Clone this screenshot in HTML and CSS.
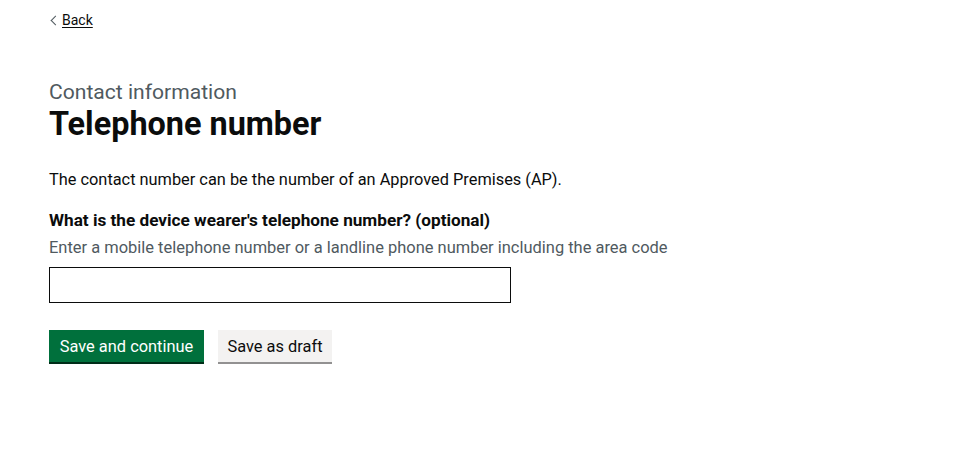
FILE: index.html
```html
<!DOCTYPE html>
<html lang="en">
<head>
<meta charset="utf-8">
<title>Telephone number</title>
<link rel="stylesheet" href="styles.css">
</head>
<body>
<div class="page">
  <a class="back-link" href="#">Back</a>
  <main class="main">
    <span class="caption">Contact information</span>
    <h1 class="heading">Telephone number</h1>
    <p class="body">The contact number can be the number of an Approved Premises (AP).</p>
    <div class="form-group">
      <label class="label" for="tel">What is the device wearer's telephone number? (optional)</label>
      <div class="hint">Enter a mobile telephone number or a landline phone number including the area code</div>
      <input class="input" id="tel" type="tel">
    </div>
    <div class="button-group">
      <button class="button button-primary" type="button">Save and continue</button>
      <button class="button button-secondary" type="button">Save as draft</button>
    </div>
  </main>
</div>
</body>
</html>
```
FILE: styles.css
```css
html, body {
  margin: 0;
  padding: 0;
  background: #ffffff;
}
body {
  font-family: Roboto, "Liberation Sans", Arial, sans-serif;
  color: #0b0c0c;
  -webkit-font-smoothing: antialiased;
}
.page {
  padding: 0 0 0 49px;
}
.back-link {
  position: relative;
  display: inline-block;
  margin-top: 12px;
  padding-left: 13px;
  font-size: 14px;
  line-height: 16px;
  color: #0b0c0c;
  text-decoration: underline;
  text-decoration-thickness: 1px;
  text-underline-offset: 2px;
}
.back-link::before {
  content: "";
  position: absolute;
  left: 3px;
  top: 5px;
  width: 6px;
  height: 6px;
  border-style: solid;
  border-color: #505a5f;
  border-width: 1px 0 0 1px;
  transform: rotate(-45deg);
}
.main {
  display: flex;
  flex-direction: column;
  align-items: flex-start;
  padding-top: 50px;
}
.caption {
  display: block;
  font-size: 21.1px;
  line-height: 25px;
  color: #505a5f;
}
.heading {
  margin: 2px 0 0;
  font-size: 32.4px;
  line-height: 36px;
  font-weight: 700;
}
.body {
  margin: 27px 0 0;
  font-size: 16.35px;
  line-height: 22px;
}
.form-group {
  display: flex;
  flex-direction: column;
  align-items: flex-start;
  margin-top: 18px;
}
.label {
  font-size: 17.18px;
  line-height: 22px;
  font-weight: 700;
}
.hint {
  margin-top: 6px;
  font-size: 16.47px;
  line-height: 22px;
  color: #505a5f;
}
.input {
  box-sizing: border-box;
  margin: 8px 0 0;
  width: 462px;
  height: 36px;
  padding: 4px;
  border: 1px solid #0b0c0c;
  border-radius: 0;
  font: inherit;
  font-size: 16.4px;
  background: #ffffff;
}
.button-group {
  display: flex;
  align-items: flex-start;
  gap: 14px;
  margin-top: 27px;
}
.button {
  box-sizing: border-box;
  height: 34px;
  margin: 0;
  padding: 2px 9px 0;
  border: 0;
  border-bottom: 2px solid transparent;
  border-radius: 0;
  font-family: inherit;
  font-size: 16.4px;
  line-height: 30px;
  cursor: pointer;
}
.button-primary {
  width: 155px;
  background: #00703c;
  color: #ffffff;
  border-bottom-color: #002d18;
}
.button-secondary {
  width: 114px;
  background: #f3f2f1;
  color: #0b0c0c;
  border-bottom-color: #929191;
}
```
